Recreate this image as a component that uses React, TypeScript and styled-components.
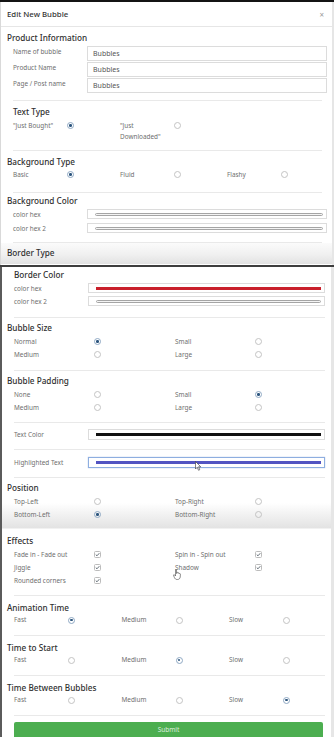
import * as React from 'react';
import styled, { createGlobalStyle, css } from 'styled-components';

const GlobalStyle = createGlobalStyle`
  html, body {
    margin: 0;
    padding: 0;
    background: #e6e6e6;
  }
  body {
    font-family: "Noto Sans", "Open Sans", sans-serif;
    color: #5f5f5f;
  }
`;

const Page = styled.div`
  position: relative;
  width: 334px;
  height: 737px;
  overflow: hidden;
  background: #e6e6e6;
`;

const Letterbox = styled.div`
  height: 2px;
  background: #141414;
`;

const TopShot = styled.div`
  width: 332px;
  height: 263px;
  box-sizing: border-box;
  border-left: 1px solid #d9d9d9;
  background: #fff;
  overflow: hidden;
`;

const Header = styled.div`
  height: 24px;
  display: flex;
  align-items: center;
  justify-content: space-between;
  padding: 0 8px 0 6px;
  border-bottom: 1px solid #e6e6e6;
`;

const Title = styled.div`
  font-size: 7.8px;
  font-weight: 500;
  color: #333;
`;

const Close = styled.span`
  font-size: 8px;
  color: #9a9a9a;
`;

const Body = styled.div`
  padding: 4px 5px 0 6px;
`;

const Heading = styled.div<{ $indent?: number; $mt?: number }>`
  height: 14px;
  line-height: 14px;
  font-size: 8.2px;
  font-weight: 500;
  color: #2f2f2f;
  padding-left: ${(p) => p.$indent ?? 0}px;
  margin-top: ${(p) => p.$mt ?? 0}px;
  white-space: nowrap;
`;

const Rule = styled.div<{ $indent: number; $right?: number; $mt: number }>`
  height: 1px;
  background: #e9e9e9;
  margin: ${(p) => p.$mt}px ${(p) => p.$right ?? 0}px 0 ${(p) => p.$indent}px;
`;

const FieldRow = styled.div<{ $labelW: number; $h: number; $mt?: number; $indent: number }>`
  display: grid;
  grid-template-columns: ${(p) => p.$labelW - p.$indent}px 1fr;
  padding-left: ${(p) => p.$indent}px;
  height: ${(p) => p.$h}px;
  margin-top: ${(p) => p.$mt ?? 0}px;
  align-items: center;
`;

const FieldLabel = styled.div<{ $top?: boolean }>`
  font-size: 6.4px;
  color: #6e6e6e;
  white-space: nowrap;
  ${(p) =>
    p.$top &&
    css`
      align-self: start;
      padding-top: 1px;
      line-height: 10px;
    `}
`;

const TextBox = styled.div`
  height: 15px;
  box-sizing: border-box;
  border: 1px solid #dcdcdc;
  align-self: start;
  padding-left: 5px;
  font-size: 7px;
  line-height: 13px;
  color: #555;
`;

const Swatch = styled.div<{ $focus?: boolean }>`
  height: 100%;
  box-sizing: border-box;
  border: 1px solid ${(p) => (p.$focus ? '#8eaee0' : '#dcdcdc')};
  box-shadow: ${(p) => (p.$focus ? '0 0 1px rgba(80,120,200,0.5)' : 'none')};
  display: flex;
  align-items: center;
  padding: 0 3px 0 7px;
`;

const colorBars = {
  empty: css`
    height: 3px;
    box-sizing: border-box;
    border: 1px solid #a5a5a5;
    border-radius: 2px;
    background: #f4f4f4;
  `,
  red: css`
    height: 3px;
    background: #c9202b;
  `,
  black: css`
    height: 3px;
    background: #111;
  `,
  blue: css`
    height: 3px;
    background: #5254c2;
  `,
};

const Bar = styled.div<{ $tone: keyof typeof colorBars }>`
  flex: 1;
  ${(p) => colorBars[p.$tone]}
`;

const ChoiceGrid = styled.div<{ $cols: number; $colW: number; $indent: number; $rowH: number; $mt?: number }>`
  display: grid;
  grid-template-columns: repeat(${(p) => p.$cols}, ${(p) => p.$colW}px);
  grid-auto-rows: ${(p) => p.$rowH}px;
  padding-left: ${(p) => p.$indent}px;
  margin-top: ${(p) => p.$mt ?? 0}px;
`;

const Option = styled.div<{ $labelW: number; $rowH: number }>`
  display: grid;
  grid-template-columns: ${(p) => p.$labelW}px 7px;
  align-items: center;
  height: ${(p) => p.$rowH}px;
`;

const OptionLabel = styled.div<{ $lh: number }>`
  font-size: 6.4px;
  line-height: ${(p) => p.$lh}px;
  color: #6e6e6e;
  white-space: nowrap;
  align-self: start;
`;

const Radio = styled.span<{ $on?: boolean; $lh: number }>`
  width: 7px;
  height: 7px;
  box-sizing: border-box;
  border-radius: 50%;
  border: 1px solid ${(p) => (p.$on ? '#8fa9c4' : '#c3c3c3')};
  align-self: start;
  margin-top: ${(p) => (p.$lh - 7) / 2}px;
  display: flex;
  align-items: center;
  justify-content: center;
  &::after {
    content: '';
    width: 2.5px;
    height: 2.5px;
    border-radius: 50%;
    background: ${(p) => (p.$on ? '#2c557d' : 'transparent')};
  }
`;

const Check = styled.span<{ $lh: number }>`
  width: 7px;
  height: 7px;
  box-sizing: border-box;
  border-radius: 1.5px;
  border: 1px solid #bcbcbc;
  align-self: start;
  margin-top: ${(p) => (p.$lh - 7) / 2}px;
  display: flex;
  align-items: center;
  justify-content: center;
  svg {
    display: block;
  }
`;

const Fade = styled.div`
  height: 21px;
  padding: 3px 0 0 6px;
  box-sizing: border-box;
  background: linear-gradient(to bottom, #fbfbfb 0%, #f0f0f0 55%, #e2e2e2 100%);
`;

const Seam = styled.div`
  height: 2px;
  width: 334px;
  background: #3e3e3e;
`;

const BottomShot = styled.div`
  position: relative;
  width: 331px;
  height: 470px;
  box-sizing: border-box;
  border-left: 2px solid #5b5b5b;
  background: #fff;
  padding: 1px 6px 0 5px;
`;

const Shade = styled.div`
  margin: 0 -6px 0 -5px;
  padding: 0 6px 13px 5px;
  background: linear-gradient(
    to bottom,
    #fff 0px,
    #fff 8px,
    #f1f1f1 20px,
    #e3e3e3 33px,
    #fff 34px
  );
`;

const Submit = styled.button`
  display: block;
  width: 309px;
  height: 20px;
  margin: 6px 0 0 7px;
  padding: 0 0 5px;
  border: none;
  border-radius: 2px;
  background: #4cae50;
  color: rgba(255, 255, 255, 0.82);
  font-family: "Noto Sans", sans-serif;
  font-size: 6.5px;
  line-height: 15px;
`;

const Pointer = styled.svg<{ $x: number; $y: number }>`
  position: absolute;
  left: ${(p) => p.$x}px;
  top: ${(p) => p.$y}px;
  overflow: visible;
`;

type Opt = { label: React.ReactNode; on?: boolean };

function Choices({
  options,
  kind = 'radio',
  cols,
  colW,
  labelW,
  indent,
  rowH,
  lh,
  mt,
}: {
  options: Opt[];
  kind?: 'radio' | 'check';
  cols: number;
  colW: number;
  labelW: number;
  indent: number;
  rowH: number;
  lh?: number;
  mt?: number;
}) {
  const line = lh ?? rowH;
  return (
    <ChoiceGrid $cols={cols} $colW={colW} $indent={indent} $rowH={rowH} $mt={mt}>
      {options.map((o, i) => (
        <Option key={i} $labelW={labelW} $rowH={rowH}>
          <OptionLabel $lh={line}>{o.label}</OptionLabel>
          {kind === 'radio' ? (
            <Radio $on={o.on} $lh={line} />
          ) : (
            <Check $lh={line}>
              <svg width="5" height="5" viewBox="0 0 10 10">
                <path d="M1.5 5.2 L4 7.6 L8.6 2.4" fill="none" stroke="#3d4a55" strokeWidth="1.6" />
              </svg>
            </Check>
          )}
        </Option>
      ))}
    </ChoiceGrid>
  );
}

const speeds = (pick: number): Opt[] =>
  ['Fast', 'Medium', 'Slow'].map((label, i) => ({ label, on: i === pick }));

export default function App() {
  return (
    <Page>
      <GlobalStyle />
      <Letterbox />
      <TopShot>
        <Header>
          <Title>Edit New Bubble</Title>
          <Close>×</Close>
        </Header>
        <Body>
          <Heading>Product Information</Heading>
          <div style={{ height: 1 }} />
          {['Name of bubble', 'Product Name', 'Page / Post name'].map((l) => (
            <FieldRow key={l} $labelW={80} $indent={6} $h={16}>
              <FieldLabel $top>{l}</FieldLabel>
              <TextBox>Bubbles</TextBox>
            </FieldRow>
          ))}
          <Rule $indent={6} $right={5} $mt={6} />
          <Heading $indent={6} $mt={4}>Text Type</Heading>
          <Choices
            cols={3}
            colW={107}
            labelW={54}
            indent={6}
            rowH={22}
            lh={11}
            mt={1}
            options={[
              { label: '"Just Bought"', on: true },
              {
                label: (
                  <>
                    "Just
                    <br />
                    Downloaded"
                  </>
                ),
              },
            ]}
          />
          <Rule $indent={6} $right={5} $mt={8} />
          <Heading $mt={4}>Background Type</Heading>
          <Choices
            cols={3}
            colW={107}
            labelW={54}
            indent={6}
            rowH={11}
            options={[{ label: 'Basic', on: true }, { label: 'Fluid' }, { label: 'Flashy' }]}
          />
          <Rule $indent={6} $right={5} $mt={12} />
          <Heading $mt={1}>Background Color</Heading>
          <FieldRow $labelW={80} $indent={6} $h={10} $mt={1}>
            <FieldLabel>color hex</FieldLabel>
            <Swatch>
              <Bar $tone="empty" />
            </Swatch>
          </FieldRow>
          <FieldRow $labelW={80} $indent={6} $h={10} $mt={4}>
            <FieldLabel>color hex 2</FieldLabel>
            <Swatch>
              <Bar $tone="empty" />
            </Swatch>
          </FieldRow>
          <Rule $indent={6} $right={5} $mt={9} />
        </Body>
        <Fade>
          <Heading>Border Type</Heading>
        </Fade>
      </TopShot>
      <Seam />
      <BottomShot>
        <Heading $indent={7}>Border Color</Heading>
        <FieldRow $labelW={81} $indent={7} $h={10} $mt={1}>
          <FieldLabel>color hex</FieldLabel>
          <Swatch>
            <Bar $tone="red" />
          </Swatch>
        </FieldRow>
        <FieldRow $labelW={81} $indent={7} $h={10} $mt={3}>
          <FieldLabel>color hex 2</FieldLabel>
          <Swatch>
            <Bar $tone="empty" />
          </Swatch>
        </FieldRow>
        <Rule $indent={7} $mt={11} />

        <Heading $mt={3}>Bubble Size</Heading>
        <Choices
          cols={2}
          colW={161}
          labelW={80}
          indent={7}
          rowH={13}
          options={[{ label: 'Normal', on: true }, { label: 'Small' }, { label: 'Medium' }, { label: 'Large' }]}
        />
        <Rule $indent={7} $mt={9} />

        <Heading $mt={3}>Bubble Padding</Heading>
        <Choices
          cols={2}
          colW={161}
          labelW={80}
          indent={7}
          rowH={13}
          options={[{ label: 'None' }, { label: 'Small', on: true }, { label: 'Medium' }, { label: 'Large' }]}
        />
        <Rule $indent={7} $mt={8} />

        <FieldRow $labelW={81} $indent={7} $h={11} $mt={6}>
          <FieldLabel>Text Color</FieldLabel>
          <Swatch>
            <Bar $tone="black" />
          </Swatch>
        </FieldRow>
        <Rule $indent={7} $mt={9} />
        <FieldRow $labelW={81} $indent={7} $h={11} $mt={7}>
          <FieldLabel>Highlighted Text</FieldLabel>
          <Swatch $focus>
            <Bar $tone="blue" />
          </Swatch>
        </FieldRow>
        <Rule $indent={7} $mt={9} />

        <Heading $mt={3}>Position</Heading>
        <Shade>
          <Choices
            cols={2}
            colW={161}
            labelW={80}
            indent={7}
            rowH={13}
            options={[
              { label: 'Top-Left' },
              { label: 'Top-Right' },
              { label: 'Bottom-Left', on: true },
              { label: 'Bottom-Right' },
            ]}
          />
        </Shade>

        <Heading>Effects</Heading>
        <Choices
          kind="check"
          cols={2}
          colW={161}
          labelW={80}
          indent={7}
          rowH={13}
          options={[
            { label: 'Fade in - Fade out' },
            { label: 'Spin in - Spin out' },
            { label: 'Jiggle' },
            { label: 'Shadow' },
            { label: 'Rounded corners' },
          ]}
        />
        <Rule $indent={7} $mt={8} />

        <Heading $mt={5}>Animation Time</Heading>
        <Choices cols={3} colW={107.5} labelW={54} indent={7} rowH={12} mt={-1} options={speeds(0)} />
        <Rule $indent={7} $mt={9} />

        <Heading $mt={5}>Time to Start</Heading>
        <Choices cols={3} colW={107.5} labelW={54} indent={7} rowH={12} mt={-1} options={speeds(1)} />
        <Rule $indent={7} $mt={9} />

        <Heading $mt={5}>Time Between Bubbles</Heading>
        <Choices cols={3} colW={107.5} labelW={54} indent={7} rowH={12} mt={-1} options={speeds(2)} />
        <Rule $indent={7} $mt={9} />

        <Submit>Submit</Submit>

        <Pointer $x={193} $y={194} width="6" height="10" viewBox="0 0 12 20">
          <path d="M1 1 L1 16 L4.5 12.5 L7 18.5 L9.5 17.5 L7 11.5 L11.5 11.5 Z" fill="#fff" stroke="#333" strokeWidth="1.2" />
        </Pointer>
        <Pointer $x={171} $y={302} width="8" height="11" viewBox="0 0 16 22">
          <path
            d="M5 2 C5 0.5 7 0.5 7 2 L7 9 L7.5 7.5 C8 6 10 6.5 9.8 8 L10 8.5 C10.5 7 12.5 7.5 12.3 9 L12.5 9.5 C13 8.5 15 9 14.8 10.5 L14.5 16 C14 19 12 21 9 21 L8 21 C5.5 21 4 19.5 3 17.5 L1 13 C0.5 11.5 2 10.5 3.2 12 L5 14 Z"
            fill="#fff"
            stroke="#333"
            strokeWidth="1.1"
          />
        </Pointer>
      </BottomShot>
    </Page>
  );
}
